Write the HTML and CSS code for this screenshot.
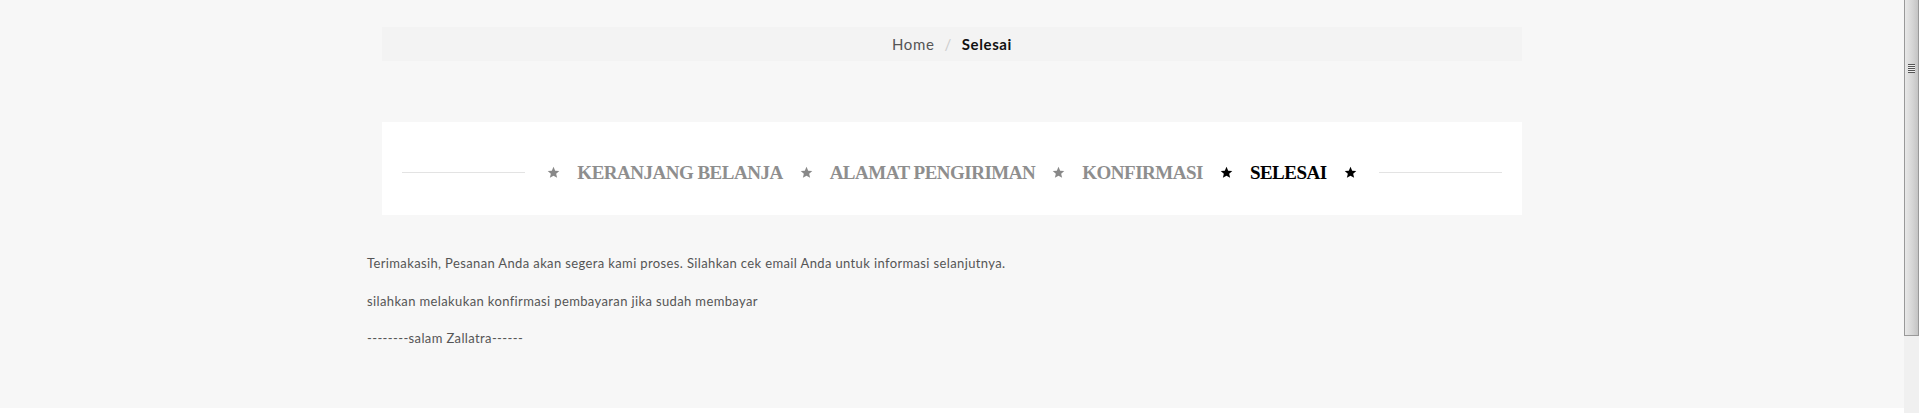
FILE: index.html
```html
<!DOCTYPE html>
<html lang="id">
<head>
    <meta charset="UTF-8">
    <meta name="viewport" content="width=device-width, initial-scale=1.0">
    <title>Selesai</title>
    <link rel="stylesheet" href="styles.css">
</head>
<body>
    <div class="page">
        <div class="container">
            <div class="breadcrumb">
                <a href="#" class="crumb">Home</a>
                <span class="sep">/</span>
                <span class="crumb active">Selesai</span>
            </div>

            <div class="steps">
                <span class="line"></span>
                <svg class="star" viewBox="0 0 24 24"><path d="M12 1.5l3.1 7.2 7.6.6-5.8 5 1.8 7.6L12 17.9l-6.7 4 1.8-7.6-5.8-5 7.6-.6z"/></svg>
                <span class="step">Keranjang Belanja</span>
                <svg class="star" viewBox="0 0 24 24"><path d="M12 1.5l3.1 7.2 7.6.6-5.8 5 1.8 7.6L12 17.9l-6.7 4 1.8-7.6-5.8-5 7.6-.6z"/></svg>
                <span class="step">Alamat Pengiriman</span>
                <svg class="star" viewBox="0 0 24 24"><path d="M12 1.5l3.1 7.2 7.6.6-5.8 5 1.8 7.6L12 17.9l-6.7 4 1.8-7.6-5.8-5 7.6-.6z"/></svg>
                <span class="step">Konfirmasi</span>
                <svg class="star on" viewBox="0 0 24 24"><path d="M12 1.5l3.1 7.2 7.6.6-5.8 5 1.8 7.6L12 17.9l-6.7 4 1.8-7.6-5.8-5 7.6-.6z"/></svg>
                <span class="step on">Selesai</span>
                <svg class="star on" viewBox="0 0 24 24"><path d="M12 1.5l3.1 7.2 7.6.6-5.8 5 1.8 7.6L12 17.9l-6.7 4 1.8-7.6-5.8-5 7.6-.6z"/></svg>
                <span class="line"></span>
            </div>

            <div class="message">
                <p>Terimakasih, Pesanan Anda akan segera kami proses. Silahkan cek email Anda untuk informasi selanjutnya.</p>
                <p>silahkan melakukan konfirmasi pembayaran jika sudah membayar</p>
                <p>--------salam Zallatra------</p>
            </div>
        </div>
    </div>

    <div class="scrollbar">
        <div class="thumb"><span class="grip"></span></div>
        <div class="track"></div>
    </div>
</body>
</html>
```

FILE: styles.css
```css
html, body {
    margin: 0;
    height: 413px;
    overflow: hidden;
}
body {
    display: flex;
    background-color: #fff;
    font-family: Lato, "Open Sans", sans-serif;
}
.page {
    flex: 1;
    height: 408px;
    background-color: #f7f7f7;
}
.container {
    width: 1170px;
    margin: 0 auto;
}
.breadcrumb {
    margin: 27px 15px 0;
    height: 34px;
    background-color: #f3f3f3;
    display: flex;
    justify-content: center;
    align-items: center;
    gap: 10px;
    font-size: 15px;
    letter-spacing: .6px;
}
.crumb {
    color: #555;
    text-decoration: none;
}
.crumb.active {
    color: #111;
    font-weight: bold;
}
.sep {
    color: #ccc;
}
.steps {
    margin: 61px 15px 0;
    height: 93px;
    box-sizing: border-box;
    padding: 8px 20px 0;
    background-color: #fff;
    display: flex;
    align-items: center;
    gap: 17px;
}
.line {
    flex: 1;
    height: 1px;
    background-color: #e3e3e3;
    margin: 0 5px 0 0;
}
.line:last-child {
    margin: 0 0 0 5px;
}
.step {
    font-family: "Liberation Serif", serif;
    font-weight: bold;
    font-size: 19px;
    letter-spacing: -.5px;
    text-transform: uppercase;
    color: #8e8e8e;
}
.step.on {
    color: #000;
}
.star {
    width: 13px;
    height: 13px;
    fill: #888;
    flex-shrink: 0;
}
.star.on {
    fill: #000;
}
.message {
    padding-top: 38px;
    font-size: 13px;
    line-height: 20px;
    letter-spacing: .37px;
    color: #555;
}
.message p {
    margin: 0 0 17.5px;
}
.scrollbar {
    width: 15px;
    display: flex;
    flex-direction: column;
    background-color: #f0f0f0;
}
.thumb {
    height: 336px;
    box-sizing: border-box;
    border: 1px solid #999;
    border-top: none;
    background: linear-gradient(to right, #e8e8e8, #d4d4d4 60%, #c4c4c4);
    display: flex;
    justify-content: center;
    padding-top: 64px;
}
.grip {
    width: 7px;
    height: 9px;
    background: repeating-linear-gradient(to bottom, #555 0 1px, #eee 1px 2px);
}
.track {
    flex: 1;
    background-color: #f0f0f0;
}
```
